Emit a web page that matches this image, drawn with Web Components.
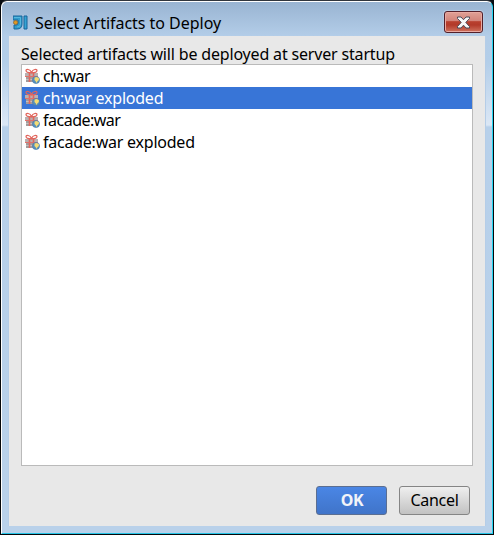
<!DOCTYPE html>
<html lang="en"><head><meta charset="utf-8"><title>Select Artifacts to Deploy</title>
<style>html,body{margin:0;width:494px;height:535px;overflow:hidden;background:#080c12}body{font:16px/22px "Noto Sans","Open Sans",sans-serif;color:#000}</style></head>
<body>
<dialog-window>
  <title-bar slot="title">Select Artifacts to Deploy</title-bar>
  <dialog-label>Selected artifacts will be deployed at server startup</dialog-label>
  <artifact-list>
    <artifact-row style="letter-spacing:-.5px">ch:war</artifact-row>
    <artifact-row selected>ch:war exploded</artifact-row>
    <artifact-row style="letter-spacing:-.5px">facade:war</artifact-row>
    <artifact-row>facade:war exploded</artifact-row>
  </artifact-list>
  <button-bar><push-button primary>OK</push-button><push-button>Cancel</push-button></button-bar>
</dialog-window>
<script>
const define=(name,html)=>customElements.define(name,class extends HTMLElement{
  constructor(){super();this.attachShadow({mode:'open'}).innerHTML=html;}
});
define('dialog-window',`<style>
:host{display:flex;flex-direction:column;box-sizing:border-box;width:494px;height:535px;border:1px solid #05070a;border-top-color:#30353d;border-radius:7px 7px 0 0;background:#080c12}
.glass{flex:1;display:flex;flex-direction:column;box-sizing:border-box;border:1px solid #fff;border-right-color:#24d5f2;border-bottom-color:#24c4e6;border-radius:6px 6px 0 0;padding:0 7px 7px;
background:linear-gradient(#99b4d2 0,#b3cde8 34px,#b3cee9 60px,#dbe7f5 123px,#b7d0ea 125px,#b9d1ea 100%)}
main{flex:1;display:flex;flex-direction:column;background:#e8e8e8;padding:7px 12px 10px;box-shadow:-1px 0 #b5cde7,1px 0 #b5cde7}
</style><div class="glass"><slot name="title"></slot><main><slot></slot></main></div>`);
define('title-bar',`<style>
:host{display:flex;height:34px;align-items:center;letter-spacing:-.03px}
.logo{margin:7px 0 0 4px;flex:none}.t{margin:7px 0 0 7px;flex:1;white-space:nowrap}
.close{box-sizing:border-box;width:39px;height:22px;margin:6px 2px 0 0;border:1px solid #53202a;border-radius:3px;box-shadow:inset 0 0 0 1px #e9aaa2,0 0 0 1px #b4cae2;background:linear-gradient(#e1a196 0,#d2847a 45%,#b9402f 48%,#b33a2a 65%,#cf735f 100%);display:flex;align-items:center;justify-content:center}
</style><svg class="logo" width="15" height="16" viewBox="0 0 15 16"><path d="M0 1h9v8q0 5-5 5H1v-4h2q2 0 2-2V5H0z" fill="#319bcb" stroke="#17669b"/><path d="M1 2.5h6.5V9q0 3-3.5 3" fill="none" stroke="#55b7de"/><path d="M11 1h3v13h-3z" fill="#36a4d3" stroke="#15639a"/><circle cx="2.6" cy="7.5" r="2.1" fill="#e09820" stroke="#80673c" stroke-width=".8"/></svg>
<span class="t"><slot></slot></span>
<div class="close"><svg width="15" height="13" viewBox="0 0 15 13"><path d="M1.5 1H5l2.5 2.7L10 1h3.5v1.5L9.8 6.4l3.7 4.1V12H10L7.5 9.2 5 12H1.5v-1.5l3.7-4.1-3.7-3.9z" fill="#f8f8f8" stroke="#4a4c5a" stroke-width="1"/></svg></div>`);
define('dialog-label',`<style>:host{display:block;height:21px;line-height:22px;white-space:nowrap;letter-spacing:-.17px}</style><slot></slot>`);
define('artifact-list',`<style>:host{display:block;box-sizing:border-box;width:452px;height:402px;border:1px solid #bababa;background:#fff}</style><slot></slot>`);
define('artifact-row',`<style>
:host{display:flex;height:22px;align-items:center;padding-left:2px;white-space:nowrap;letter-spacing:-.23px}
:host([selected]){background:#3875d7;color:#fff}svg{flex:none;margin-right:3px}
</style><svg width="16" height="16" viewBox="0 0 16 16">
<path d="M2 8h11v6H2z" fill="#a19d9d"/><path d="M1 5h13v3.5H1z" fill="#b9b1b1"/><path d="M2 11.5h11" stroke="#c5bfbf"/>
<path d="M5.5 5v9M9.5 5v9" stroke="#e2665d" stroke-width="1.6"/><path d="M1 8.5h13" stroke="#e27169"/><path d="M7.5 4.8C5 4.8 2 4 2 2.5S6 .6 7.5 4.5C9 .6 13 1 13 2.5S10 4.8 7.5 4.8" fill="none" stroke="#e1655c" stroke-width="1.2"/>
<circle cx="12" cy="12" r="3.6" fill="#5790bb" stroke="#447eae" stroke-width=".6"/><path d="M10.6 9.4q3.2-1.1 4.4 1.2.2 2-1.6 2.7l-.7 1.6-1.2-1.8q-1.6-1-.9-3.7" fill="#f4dc72"/></svg><slot></slot>`);
define('button-bar',`<style>:host{display:flex;gap:12px;justify-content:flex-end;margin-top:20px;padding-right:3px}</style><slot></slot>`);
define('push-button',`<style>
:host{display:flex;box-sizing:border-box;width:71px;height:29px;border:1px solid #858585;border-radius:3px;background:linear-gradient(#efefef,#c2c2c2);align-items:center;justify-content:center;letter-spacing:-.3px;line-height:20px;padding-bottom:1px}
:host([primary]){border-color:#5b6e91;background:linear-gradient(#4a86e5,#4074c9);color:#f2f4f8;font-weight:700;padding-left:1px}
</style><slot></slot>`);
</script></body></html>
